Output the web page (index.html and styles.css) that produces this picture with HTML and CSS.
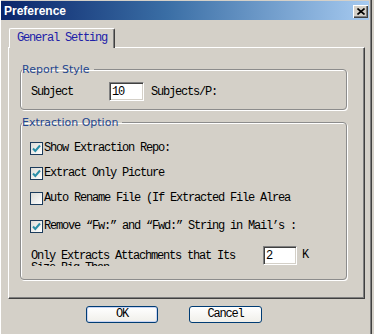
FILE: index.html
```html
<!DOCTYPE html>
<html lang="en">
<head>
  <meta charset="utf-8">
  <title>Preference</title>
  <link rel="stylesheet" href="styles.css">
</head>
<body>
  <div class="window">
    <div class="titlebar">
      <span class="title">Preference</span>
      <span class="close">
        <svg width="8" height="7" viewBox="0 0 8 7"><path d="M0.5 0.5 L7.5 6.5 M7.5 0.5 L0.5 6.5" stroke="#000" stroke-width="1.6" fill="none"/></svg>
      </span>
    </div>

    <div class="tabs">
      <div class="tab">General Setting</div>
    </div>

    <div class="pane">
      <fieldset class="group report">
        <legend>Report Style</legend>
        <div class="subject-row">
          <span class="subject-lbl">Subject</span>
          <input class="field w35" type="text" value="10">
          <span class="unit">Subjects/P:</span>
        </div>
      </fieldset>

      <fieldset class="group extract">
        <legend>Extraction Option</legend>
        <div class="check first"><span class="box on"><svg width="11" height="11" viewBox="0 0 11 11"><path d="M2 5.5 L4.3 8 L9 2.5" stroke="#2a8fa8" stroke-width="2" fill="none"/></svg></span><span>Show Extraction Repo:</span></div>
        <div class="check"><span class="box on"><svg width="11" height="11" viewBox="0 0 11 11"><path d="M2 5.5 L4.3 8 L9 2.5" stroke="#2a8fa8" stroke-width="2" fill="none"/></svg></span><span>Extract Only Picture</span></div>
        <div class="check"><span class="box"></span><span>Auto Rename File (If Extracted File Alrea</span></div>
        <div class="check wide"><span class="box on"><svg width="11" height="11" viewBox="0 0 11 11"><path d="M2 5.5 L4.3 8 L9 2.5" stroke="#2a8fa8" stroke-width="2" fill="none"/></svg></span><span>Remove “Fw:” and “Fwd:” String in Mail’s :</span></div>
        <div class="size-row">
          <div class="size-lbl">Only Extracts Attachments that Its Size Big Than</div>
          <input class="field w34" type="text" value="2">
          <span class="unit-k">K</span>
        </div>
      </fieldset>
    </div>

    <div class="buttons">
      <button class="btn default">OK</button>
      <button class="btn">Cancel</button>
    </div>
  </div>
</body>
</html>
```

FILE: styles.css
```css
/* --- page --- */
*{box-sizing:border-box}
body{margin:0;background:#d4d0c8;font-family:"Liberation Mono",monospace;font-size:12px;letter-spacing:-1.2px;color:#000}
.window{width:372px;height:334px;padding:1px 2px 0 1px;border-right:1px solid #404040;box-shadow:inset -1px 0 0 #808080,inset 1px 0 0 #fff}

/* --- title bar --- */
.titlebar{height:19px;display:flex;align-items:flex-start;background:linear-gradient(to right,#0a246a 0%,#3a6ea5 45%,#a6caf0 100%)}
.title{font-family:"Liberation Sans",Arial,sans-serif;font-weight:bold;font-size:12px;letter-spacing:0;color:#fff;line-height:15px;margin:3px 0 0 3px}
.close{margin:4px 1px 0 auto;width:15px;height:13px;background:#d4d0c8;display:flex;align-items:center;justify-content:center;box-shadow:inset 1px 1px 0 #fff,inset -1px -1px 0 #404040,inset -2px -2px 0 #808080}

/* --- tabs --- */
.tabs{display:flex;margin:8px 0 0 8px}
.tab{position:relative;width:106px;height:20px;margin-bottom:-1px;padding-left:7px;line-height:18px;color:#2020a8;background:#d4d0c8;border-top:1px solid #fff;border-left:1px solid #fff;border-right:1px solid #404040;border-radius:2px 2px 0 0;box-shadow:inset -1px 0 0 #808080}
.pane{margin-left:7px;width:357px;height:252px;padding:15px 17px 0 11px;border-top:1px solid #fff;border-left:1px solid #fff;border-right:1px solid #404040;border-bottom:1px solid #404040;box-shadow:inset -1px -1px 0 #808080}

/* --- group boxes --- */
.group{margin:0;min-width:0;padding:6px 0 8px 0;border:1px solid #8c8c8c;border-radius:4px;box-shadow:1px 1px 0 #fff,inset 1px 1px 0 #fff}
.group legend{margin-left:1px;padding:0 4px 0 0;font-family:"DejaVu Sans",sans-serif;font-size:11px;letter-spacing:0;line-height:13px;color:#24468f}
.extract{margin-top:6px;padding:0 0 12px 0}

.subject-row{display:flex;align-items:center;padding-left:10px;height:19px}
.subject-lbl{width:78px}
.unit{margin-left:7px}

.field{height:19px;padding:0 0 0 2px;border:1px solid;border-color:#808080 #fff #fff #808080;box-shadow:inset 1px 1px 0 #404040,inset -1px -1px 0 #d4d0c8;background:#fff;font-family:"Liberation Mono",monospace;font-size:12px;letter-spacing:-1.2px;color:#000;outline:none}
.w35{width:35px}
.w34{width:34px}

/* --- checkboxes --- */
.check{display:flex;align-items:center;height:13px;line-height:13px;padding-left:9px;margin-top:12px;white-space:nowrap}
.check.first{margin-top:13px}
.check.wide{margin-top:15px}
.box{width:13px;height:13px;margin-right:1px;border:1px solid #1c3c5c;background:linear-gradient(135deg,#dcdcd7,#fff);display:flex;align-items:center;justify-content:center;flex:none}

.size-row{display:flex;align-items:flex-start;margin-top:13px;padding-left:10px;height:21px}
.size-lbl{width:222px;margin:4px 10px 0 0;line-height:12px;height:16px;overflow:hidden}
.unit-k{margin-left:5px;line-height:19px}

/* --- buttons --- */
.buttons{display:flex;margin:7px 0 0 85px}
.btn{width:72px;height:17px;padding:0;border:1px solid #003c74;border-radius:3px;background:linear-gradient(#fff,#f0efea);font-family:"Liberation Mono",monospace;font-size:12px;letter-spacing:-1.2px;line-height:15px;color:#000}
.btn + .btn{width:73px;margin-left:31px}
.btn.default{box-shadow:inset 0 0 0 1px #c8d4f4}
```
